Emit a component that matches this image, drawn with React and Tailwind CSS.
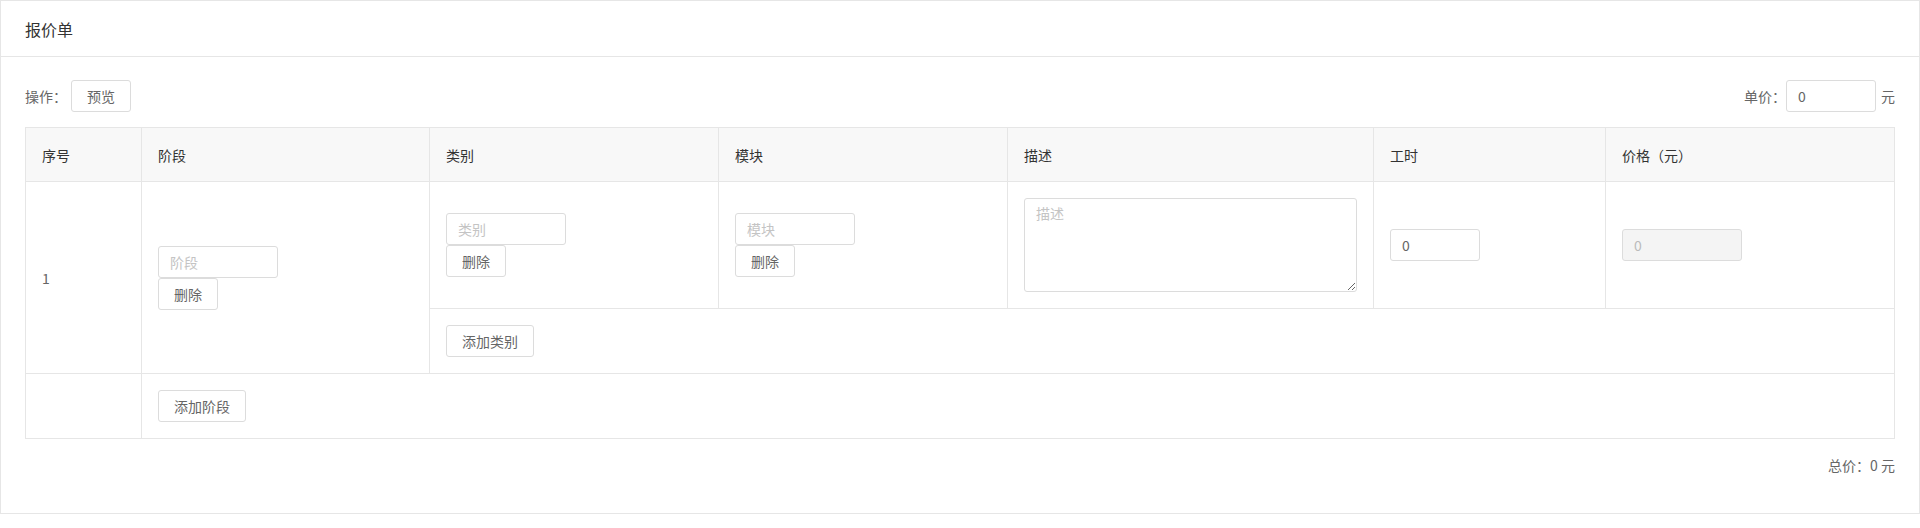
import React from "react";

const inputBase =
  "block h-[32px] border border-[#dcdcdc] rounded-[3px] px-[11px] text-[14px] leading-[20px] placeholder:text-[#c4c4c4] outline-none";
const inputCls = inputBase + " bg-white text-[#666]";
const btnCls =
  "h-[32px] px-[15px] border border-[#dcdcdc] rounded-[3px] bg-white text-[14px] leading-[30px] text-[#666] whitespace-nowrap";
const td = "border border-[#e6e6e6] px-[16px] align-middle";
const th = "border border-[#e6e6e6] px-[16px] h-[54px] bg-[#f8f8f8] text-left font-normal text-[14px] text-[#333]";

export default function App() {
  return (
    <div className="w-[1920px] h-[528px] bg-white font-['Noto_Sans_CJK_SC','Noto_Sans',sans-serif] text-[14px] leading-[20px]">
      <div className="border border-[#e6e6e6] bg-white">
        <div className="h-[56px] border-b border-[#e6e6e6] px-[24px] flex items-center">
          <span className="text-[16px] leading-[22px] text-[#333]">报价单</span>
        </div>
        <div className="px-[24px] pt-[23px] pb-[38px]">
          <div className="flex items-center justify-between h-[32px]">
            <div className="flex items-center">
              <span className="text-[#666]">操作：</span>
              <button className={btnCls + " ml-[4px]"}>预览</button>
            </div>
            <div className="flex items-center">
              <span className="text-[#666]">单价：</span>
              <input className={inputCls + " w-[90px] px-[10px]"} defaultValue="0" />
              <span className="ml-[5px] text-[#666]">元</span>
            </div>
          </div>
          <table className="mt-[15px] w-full table-fixed border-collapse">
            <colgroup>
              <col className="w-[116px]" />
              <col className="w-[288px]" />
              <col className="w-[289px]" />
              <col className="w-[289px]" />
              <col className="w-[366px]" />
              <col className="w-[232px]" />
              <col />
            </colgroup>
            <thead>
              <tr>
                <th className={th}>序号</th>
                <th className={th}>阶段</th>
                <th className={th}>类别</th>
                <th className={th}>模块</th>
                <th className={th}>描述</th>
                <th className={th}>工时</th>
                <th className={th}>价格（元）</th>
              </tr>
            </thead>
            <tbody>
              <tr>
                <td className={td + " text-[#666]"} rowSpan={2}>1</td>
                <td className={td} rowSpan={2}>
                  <input className={inputCls + " w-[120px]"} placeholder="阶段" />
                  <button className={btnCls}>删除</button>
                </td>
                <td className={td + " py-[16px]"}>
                  <input className={inputCls + " w-[120px]"} placeholder="类别" />
                  <button className={btnCls}>删除</button>
                </td>
                <td className={td + " py-[16px]"}>
                  <input className={inputCls + " w-[120px]"} placeholder="模块" />
                  <button className={btnCls}>删除</button>
                </td>
                <td className={td + " py-[16px]"}>
                  <textarea
                    className="block w-full h-[94px] border border-[#dcdcdc] rounded-[3px] px-[11px] py-[4px] text-[14px] leading-[20px] text-[#666] placeholder:text-[#c4c4c4] outline-none"
                    placeholder="描述"
                  />
                </td>
                <td className={td + " py-[16px]"}>
                  <input className={inputCls + " w-[90px] px-[10px]"} defaultValue="0" />
                </td>
                <td className={td + " py-[16px]"}>
                  <input
                    className={inputBase + " w-[120px] px-[10px] bg-[#f4f4f4] text-[#bbb] disabled:bg-[#f4f4f4]"}
                    defaultValue="0"
                    disabled
                  />
                </td>
              </tr>
              <tr>
                <td className={td + " py-[16px]"} colSpan={5}>
                  <button className={btnCls}>添加类别</button>
                </td>
              </tr>
              <tr>
                <td className={td}></td>
                <td className={td + " py-[16px]"} colSpan={6}>
                  <button className={btnCls}>添加阶段</button>
                </td>
              </tr>
            </tbody>
          </table>
          <div className="mt-[16px] flex justify-end text-[#666]">
            <span>总价：0 元</span>
          </div>
        </div>
      </div>
    </div>
  );
}
